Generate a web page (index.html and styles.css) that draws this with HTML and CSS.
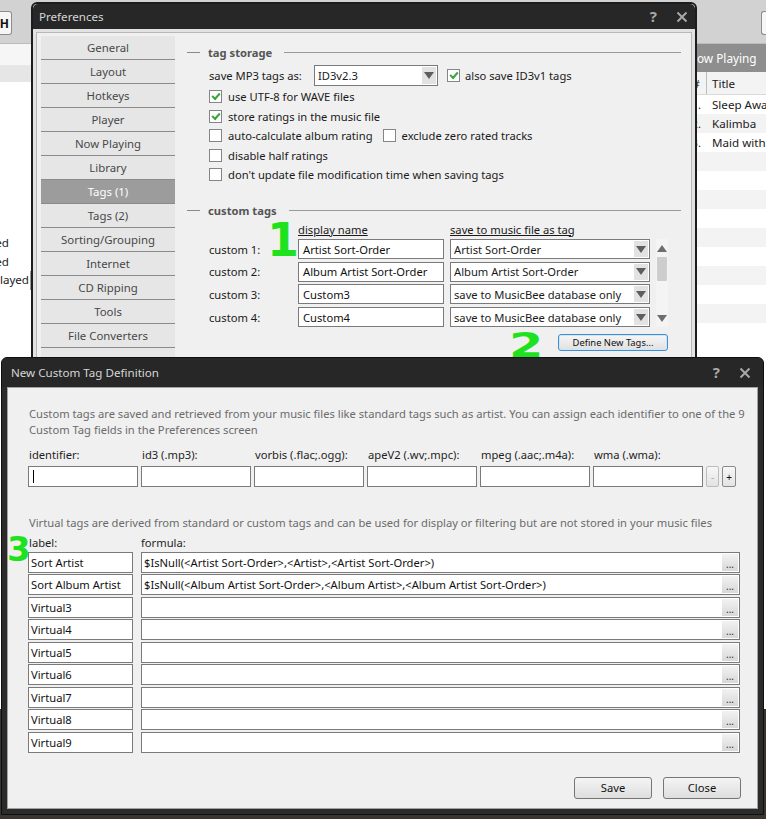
FILE: index.html
```html
<!DOCTYPE html>
<html>
<head>
<meta charset="utf-8">
<title>Preferences</title>
<link rel="stylesheet" href="styles.css">
</head>
<body>
<div class="desktop">
  <div class="app">
    <div class="toolbar">
      <div class="tb-btn tb-left">H</div>
      <div class="tb-btn tb-right"></div>
    </div>
    <div class="main">
      <div class="nav">
        <div class="nav-top"></div>
        <div class="nav-sel"></div>
        <div class="nav-items">
          <div class="nav-item pad-a"><span>ed</span></div>
          <div class="nav-item pad-a"><span>ed</span></div>
          <div class="nav-item pad-b"><span>Played</span></div>
        </div>
      </div>
      <div class="library"></div>
      <div class="nowplaying">
        <div class="np-head">Now Playing</div>
        <div class="np-cols"><div class="np-num">#</div><div class="np-title">Title</div></div>
        <div class="np-row"><div class="np-num">1.</div><div class="np-title">Sleep Away</div></div>
        <div class="np-row alt"><div class="np-num">2.</div><div class="np-title">Kalimba</div></div>
        <div class="np-row"><div class="np-num">3.</div><div class="np-title">Maid with</div></div>
        <div class="np-row alt"></div>
        <div class="np-row"></div>
        <div class="np-row alt"></div>
        <div class="np-row"></div>
        <div class="np-row alt"></div>
        <div class="np-row"></div>
        <div class="np-row alt"></div>
        <div class="np-row"></div>
        <div class="np-row alt"></div>
        <div class="np-row"></div>
      </div>
    </div>
    <div class="player"></div>
  </div>

  <div class="window prefs">
    <div class="titlebar">
      <span class="title">Preferences</span>
      <span class="tbtns"><span class="help">?</span><svg class="close" width="12" height="12" viewBox="0 0 12 12"><path d="M1.5 1.5L10.5 10.5M10.5 1.5L1.5 10.5" stroke="#a8a8a8" stroke-width="2"/></svg></span>
    </div>
    <div class="prefs-body">
      <div class="panel">
        <div class="sidebar">
          <div class="side-item">General</div>
          <div class="side-item">Layout</div>
          <div class="side-item">Hotkeys</div>
          <div class="side-item">Player</div>
          <div class="side-item">Now Playing</div>
          <div class="side-item">Library</div>
          <div class="side-item active">Tags (1)</div>
          <div class="side-item">Tags (2)</div>
          <div class="side-item">Sorting/Grouping</div>
          <div class="side-item">Internet</div>
          <div class="side-item">CD Ripping</div>
          <div class="side-item">Tools</div>
          <div class="side-item">File Converters</div>
          <div class="side-item"></div>
        </div>
        <div class="content">
          <div class="sec-head"><span class="dash"></span><span class="sec-title">tag storage</span><span class="rule"></span></div>
          <div class="sec-body">
            <div class="row first-row">
              <span class="mp3-label">save MP3 tags as:</span>
              <div class="combo mp3"><span class="combo-text">ID3v2.3</span><span class="combo-arrow"></span></div>
              <span class="cb checked v1"></span><span>also save ID3v1 tags</span>
            </div>
            <div class="row chk"><span class="cb checked"></span><span>use UTF-8 for WAVE files</span></div>
            <div class="row chk"><span class="cb checked"></span><span>store ratings in the music file</span></div>
            <div class="row chk"><span class="cb"></span><span class="auto">auto-calculate album rating</span><span class="cb"></span><span>exclude zero rated tracks</span></div>
            <div class="row chk"><span class="cb"></span><span>disable half ratings</span></div>
            <div class="row chk"><span class="cb"></span><span>don't update file modification time when saving tags</span></div>
          </div>
          <div class="sec-head sec2"><span class="dash"></span><span class="sec-title">custom tags</span><span class="rule"></span></div>
          <div class="sec-body">
            <div class="ctag-grid">
              <span></span><span class="colhead">display name</span><span class="colhead">save to music file as tag</span><span></span>
              <span class="clabel">custom 1:</span><div class="field">Artist Sort-Order</div><div class="combo"><span class="combo-text">Artist Sort-Order</span><span class="combo-arrow"></span></div>
              <div class="vscroll"><span class="up"></span><span class="thumb"></span><span class="down"></span></div>
              <span class="clabel">custom 2:</span><div class="field">Album Artist Sort-Order</div><div class="combo"><span class="combo-text">Album Artist Sort-Order</span><span class="combo-arrow"></span></div>
              <span class="clabel">custom 3:</span><div class="field">Custom3</div><div class="combo"><span class="combo-text">save to MusicBee database only</span><span class="combo-arrow"></span></div>
              <span class="clabel">custom 4:</span><div class="field">Custom4</div><div class="combo"><span class="combo-text">save to MusicBee database only</span><span class="combo-arrow"></span></div>
            </div>
            <div class="define-row"><span class="define-btn">Define New Tags...</span></div>
          </div>
        </div>
      </div>
    </div>
  </div>

  <div class="window dialog">
    <div class="titlebar dlg-title">
      <span class="title">New Custom Tag Definition</span>
      <span class="tbtns"><span class="help">?</span><svg class="close" width="12" height="12" viewBox="0 0 12 12"><path d="M1.5 1.5L10.5 10.5M10.5 1.5L1.5 10.5" stroke="#a8a8a8" stroke-width="2"/></svg></span>
    </div>
    <div class="dlg-panel">
      <p class="desc">Custom tags are saved and retrieved from your music files like standard tags such as artist. You can assign each identifier to one of the 9 Custom Tag fields in the Preferences screen</p>
      <div class="tag-grid">
        <span class="flabel">identifier:</span>
        <span class="flabel">id3 (.mp3):</span>
        <span class="flabel">vorbis (.flac;.ogg):</span>
        <span class="flabel">apeV2 (.wv;.mpc):</span>
        <span class="flabel">mpeg (.aac;.m4a):</span>
        <span class="flabel">wma (.wma):</span>
        <span></span><span></span>
        <div class="field tall"><span class="caret"></span></div>
        <div class="field tall"></div>
        <div class="field tall"></div>
        <div class="field tall"></div>
        <div class="field tall"></div>
        <div class="field tall"></div>
        <span class="mini-btn disabled">-</span>
        <span class="mini-btn">+</span>
      </div>
      <p class="desc vdesc">Virtual tags are derived from standard or custom tags and can be used for display or filtering but are not stored in your music files</p>
      <div class="vgrid">
        <span class="flabel">label:</span><span class="flabel">formula:</span>
        <div class="field vf">Sort Artist</div><div class="field vf formula"><span class="ftext">$IsNull(&lt;Artist Sort-Order&gt;,&lt;Artist&gt;,&lt;Artist Sort-Order&gt;)</span><span class="dots">...</span></div>
        <div class="field vf">Sort Album Artist</div><div class="field vf formula"><span class="ftext">$IsNull(&lt;Album Artist Sort-Order&gt;,&lt;Album Artist&gt;,&lt;Album Artist Sort-Order&gt;)</span><span class="dots">...</span></div>
        <div class="field vf">Virtual3</div><div class="field vf formula"><span class="ftext"></span><span class="dots">...</span></div>
        <div class="field vf">Virtual4</div><div class="field vf formula"><span class="ftext"></span><span class="dots">...</span></div>
        <div class="field vf">Virtual5</div><div class="field vf formula"><span class="ftext"></span><span class="dots">...</span></div>
        <div class="field vf">Virtual6</div><div class="field vf formula"><span class="ftext"></span><span class="dots">...</span></div>
        <div class="field vf">Virtual7</div><div class="field vf formula"><span class="ftext"></span><span class="dots">...</span></div>
        <div class="field vf">Virtual8</div><div class="field vf formula"><span class="ftext"></span><span class="dots">...</span></div>
        <div class="field vf">Virtual9</div><div class="field vf formula"><span class="ftext"></span><span class="dots">...</span></div>
      </div>
      <div class="dlg-buttons"><span class="btn">Save</span><span class="btn">Close</span></div>
    </div>
  </div>

  <span class="mark m1">1</span>
  <span class="mark m2">2</span>
  <span class="mark m3">3</span>
</div>
</body>
</html>
```

FILE: styles.css
```css
* { box-sizing: border-box; }
html, body { margin: 0; padding: 0; }
body {
  width: 766px; height: 819px; overflow: hidden;
  font-family: "Noto Sans", "DejaVu Sans", sans-serif;
  font-size: 11.2px; color: #1a1a1a;
}
.desktop { position: relative; width: 766px; height: 819px; overflow: hidden; background: #2e2e2e; }

/* background application */
.app { display: flex; flex-direction: column; height: 100%; background: #fff; }
.toolbar {
  height: 44px; flex: none; background: #d2d2d2; border-bottom: 1px solid #bcbcbc;
  display: flex; justify-content: space-between; align-items: flex-start; padding-top: 11px;
}
.tb-btn {
  height: 24px; border: 1px solid #8c8c8c; background: #f6f6f6;
  display: flex; align-items: center; font-weight: bold; font-size: 12px; color: #111;
}
.tb-left { width: 12px; border-left: none; border-radius: 0 3px 3px 0; justify-content: flex-end; padding-right: 2px; }
.tb-right { width: 5px; border-right: none; border-radius: 3px 0 0 3px; }
.main { flex: 1; display: flex; min-height: 0; }
.nav { width: 31px; flex: none; display: flex; flex-direction: column; overflow: hidden; }
.nav-top { height: 21px; background: #f6f6f6; }
.nav-sel { height: 17px; background: #e6e6e6; }
.nav-items { margin-top: 152px; }
.nav-item { height: 18.5px; display: flex; justify-content: flex-end; white-space: nowrap; line-height: 18.5px; font-size: 11.6px; }
.nav-item.pad-a { padding-right: 22px; }
.nav-item.pad-b { padding-right: 1px; border-right: 1px solid #9a9a9a; }
.library { flex: 1; }
.nowplaying { width: 79px; flex: none; display: flex; flex-direction: column; overflow: hidden; }
.np-head { height: 28px; background: #8e8e8e; color: #fff; font-size: 11.8px; line-height: 28px; padding-left: 1px; white-space: nowrap; }
.np-cols { height: 23px; background: #f3f3f3; border-bottom: 1px solid #dadada; display: flex; align-items: center; }
.np-cols .np-num { border-right: 1px solid #bdbdbd; height: 100%; display: flex; align-items: center; justify-content: flex-end; }
.np-num { width: 20px; flex: none; text-align: right; padding-right: 6px; }
.np-title { padding-left: 5px; white-space: nowrap; font-size: 11.6px; }
.np-row { height: 19px; display: flex; align-items: center; background: #fff; }
.np-row.alt { background: #f3f3f3; }
.player { height: 110px; flex: none; background: #3a352e; }

/* windows */
.window { position: absolute; border-radius: 6px 6px 0 0; }
.titlebar { display: flex; align-items: center; justify-content: space-between; background: #272727; color: #d6d6d6; font-size: 11.6px; border-radius: 5px 5px 0 0; }
.tbtns { display: flex; align-items: center; gap: 19px; }
.help { color: #a8a8a8; font-weight: bold; font-size: 15px; line-height: 1; }

.prefs { left: 31px; top: 2px; width: 666px; height: 420px; border: 2px solid #1c1c1c; background: #e2e2e2; }
.prefs .titlebar { height: 25px; padding: 0 7px 0 6px; }
.prefs-body { padding: 3px 3px 0 3px; }
.panel { border: 1px solid #b8b8b8; background: #f0f0f0; display: flex; height: 390px; padding: 3px 0 0 4px; }
.sidebar { width: 134px; flex: none; }
.side-item {
  height: 24px; background: #e6e6e6; border-bottom: 1px solid #8a8a8a; color: #484848;
  font-size: 11.4px; display: flex; align-items: center; justify-content: center;
}
.side-item.active { background: #9c9c9c; color: #fff; }
.content { flex: 1; padding: 1px 10px 0 12px; }
.sec-head { display: flex; align-items: center; height: 17px; margin-top: 7px; }
.sec-head.sec2 { margin-top: 17px; }
.dash { width: 13px; height: 1px; background: #8a8a8a; }
.sec-title { font-weight: bold; color: #555; margin-left: 8px; }
.rule { flex: 1; height: 1px; background: #9a9a9a; margin-left: 12px; }
.sec-body { padding-left: 22px; width: 481px; }
.row { display: flex; align-items: center; white-space: nowrap; }
.first-row { height: 21px; margin-top: 4px; }
.mp3-label { width: 105px; }
.combo {
  position: relative; height: 20px; border: 1px solid #7a7a7a; background: #fff;
  display: flex; align-items: center; padding-left: 3px; overflow: hidden; white-space: nowrap;
}
.combo.mp3 { width: 124px; height: 21px; }
.combo-text { flex: 1; overflow: hidden; }
.combo-arrow {
  width: 16px; height: 100%; background: #e2e2e2; border: 1px solid #fff; flex: none;
  display: flex; align-items: center; justify-content: center;
}
.combo-arrow::after { content: ""; border-left: 5px solid transparent; border-right: 5px solid transparent; border-top: 7px solid #5e5e5e; }
.cb {
  width: 13px; height: 13px; border: 1px solid #858585; background: #fff; flex: none; margin-right: 6px;
  display: inline-flex; align-items: center; justify-content: center;
}
.cb.checked::after {
  content: ""; width: 6px; height: 3px; border-left: 2px solid #3aa53a; border-bottom: 2px solid #3aa53a;
  transform: rotate(-48deg); margin-top: -2px;
}
.cb.v1 { margin-left: 9px; margin-right: 5px; }
.chk { height: 19.5px; }
.chk:nth-child(2) { margin-top: 1px; }
.auto { margin-right: 10px; }

.ctag-grid {
  display: grid; grid-template-columns: 83px 146px 200px 12px; column-gap: 6px;
  grid-template-rows: 15px repeat(4, 20px); row-gap: 2.67px; margin-top: 3px; width: 459px;
}
.ctag-grid > :nth-child(-n+4) { margin-bottom: -1px; }
.colhead { text-decoration: underline; line-height: 15px; white-space: nowrap; }
.clabel { display: flex; align-items: center; }
.field {
  border: 1px solid #7a7a7a; background: #fff; padding-left: 4px; display: flex; align-items: center;
  white-space: nowrap; overflow: hidden; color: #111;
}
.vscroll {
  grid-column: 4; grid-row: 2 / span 4; background: #f4f4f4; display: flex; flex-direction: column; align-items: center; padding-top: 6px;
}
.up { border-left: 5px solid transparent; border-right: 5px solid transparent; border-bottom: 7px solid #6e6e6e; }
.thumb { width: 10px; height: 24px; background: #cdcdcd; margin-top: 5px; border-radius: 1px; }
.down { border-left: 5px solid transparent; border-right: 5px solid transparent; border-top: 7px solid #6e6e6e; margin-top: auto; margin-bottom: 5px; }
.define-row { display: flex; justify-content: flex-end; width: 459px; margin-top: 7px; }
.define-btn {
  width: 110px; height: 17px; border: 1px solid #3d8fd1; border-radius: 3px;
  background: linear-gradient(#f6f6f6, #e0e0e0); font-size: 9.4px; color: #111;
  display: flex; align-items: center; justify-content: center; box-shadow: inset 0 0 0 1px #cfe6f7;
}

/* dialog */
.dialog { left: 1px; top: 357px; width: 763px; height: 458px; border: 1px solid #0f0f0f; background: #2b2b2b; padding: 0 5px 5px 5px; }
.dlg-title { height: 29px; margin: 0 -5px; padding-left: 9px; padding-right: 12px; }
.dlg-panel { border: 1px solid #a2a2a2; background: #f0f0f0; height: 422px; padding: 18px 16px 0 20px; }
.desc { margin: 0; padding-left: 1px; color: #6b6b6b; line-height: 16px; width: 725px; }
.tag-grid {
  display: grid; grid-template-columns: repeat(6, 110px) 13px 14px; column-gap: 3px;
  grid-template-rows: 15px 21px; row-gap: 4.5px; margin-top: 8.5px;
}
.flabel { padding-left: 1px; line-height: 15px; white-space: nowrap; color: #1e1e1e; }
.field.tall { height: 21px; }
.caret { width: 1px; height: 13px; background: #000; }
.mini-btn {
  height: 21px; border: 1px solid #8a8a8a; border-radius: 2px; background: linear-gradient(#f7f7f7, #e3e3e3);
  display: flex; align-items: center; justify-content: center; font-size: 10px; color: #111;
}
.mini-btn.disabled { color: #aaa; border-color: #bdbdbd; }
.vdesc { margin-top: 28px; }
.vgrid {
  display: grid; grid-template-columns: 105px 599px; column-gap: 8px;
  grid-template-rows: 15px; grid-auto-rows: 21px; row-gap: 1.5px; margin-top: 4px;
}
.vgrid > .flabel:nth-child(2) { padding-left: 0; }
.vgrid > .flabel { margin-bottom: 1.5px; }
.field.vf { padding-left: 2px; }
.formula { padding-right: 1px; }
.ftext { flex: 1; overflow: hidden; }
.dots {
  width: 16px; height: 17px; background: linear-gradient(#f2f2f2, #d8d8d8); flex: none;
  font-size: 10px; color: #333; display: flex; align-items: flex-end; justify-content: center; line-height: 13px;
}
.dlg-buttons { display: flex; justify-content: flex-end; gap: 11px; margin-top: 24px; width: 713px; }
.btn {
  width: 78px; height: 22px; border: 1px solid #767676; border-radius: 3px;
  background: linear-gradient(#f4f4f4, #dedede); display: flex; align-items: center; justify-content: center; color: #111;
}

/* annotations */
.mark { position: absolute; color: #1fe21f; font-family: "DejaVu Sans", sans-serif; font-weight: bold; line-height: 1; }
.m1 { left: 267px; top: 217px; font-size: 46px; }
.m2 { left: 509px; top: 328px; font-size: 34px; transform: scaleX(1.45); transform-origin: left top; }
.m3 { left: 7px; top: 532px; font-size: 34px; }
```
